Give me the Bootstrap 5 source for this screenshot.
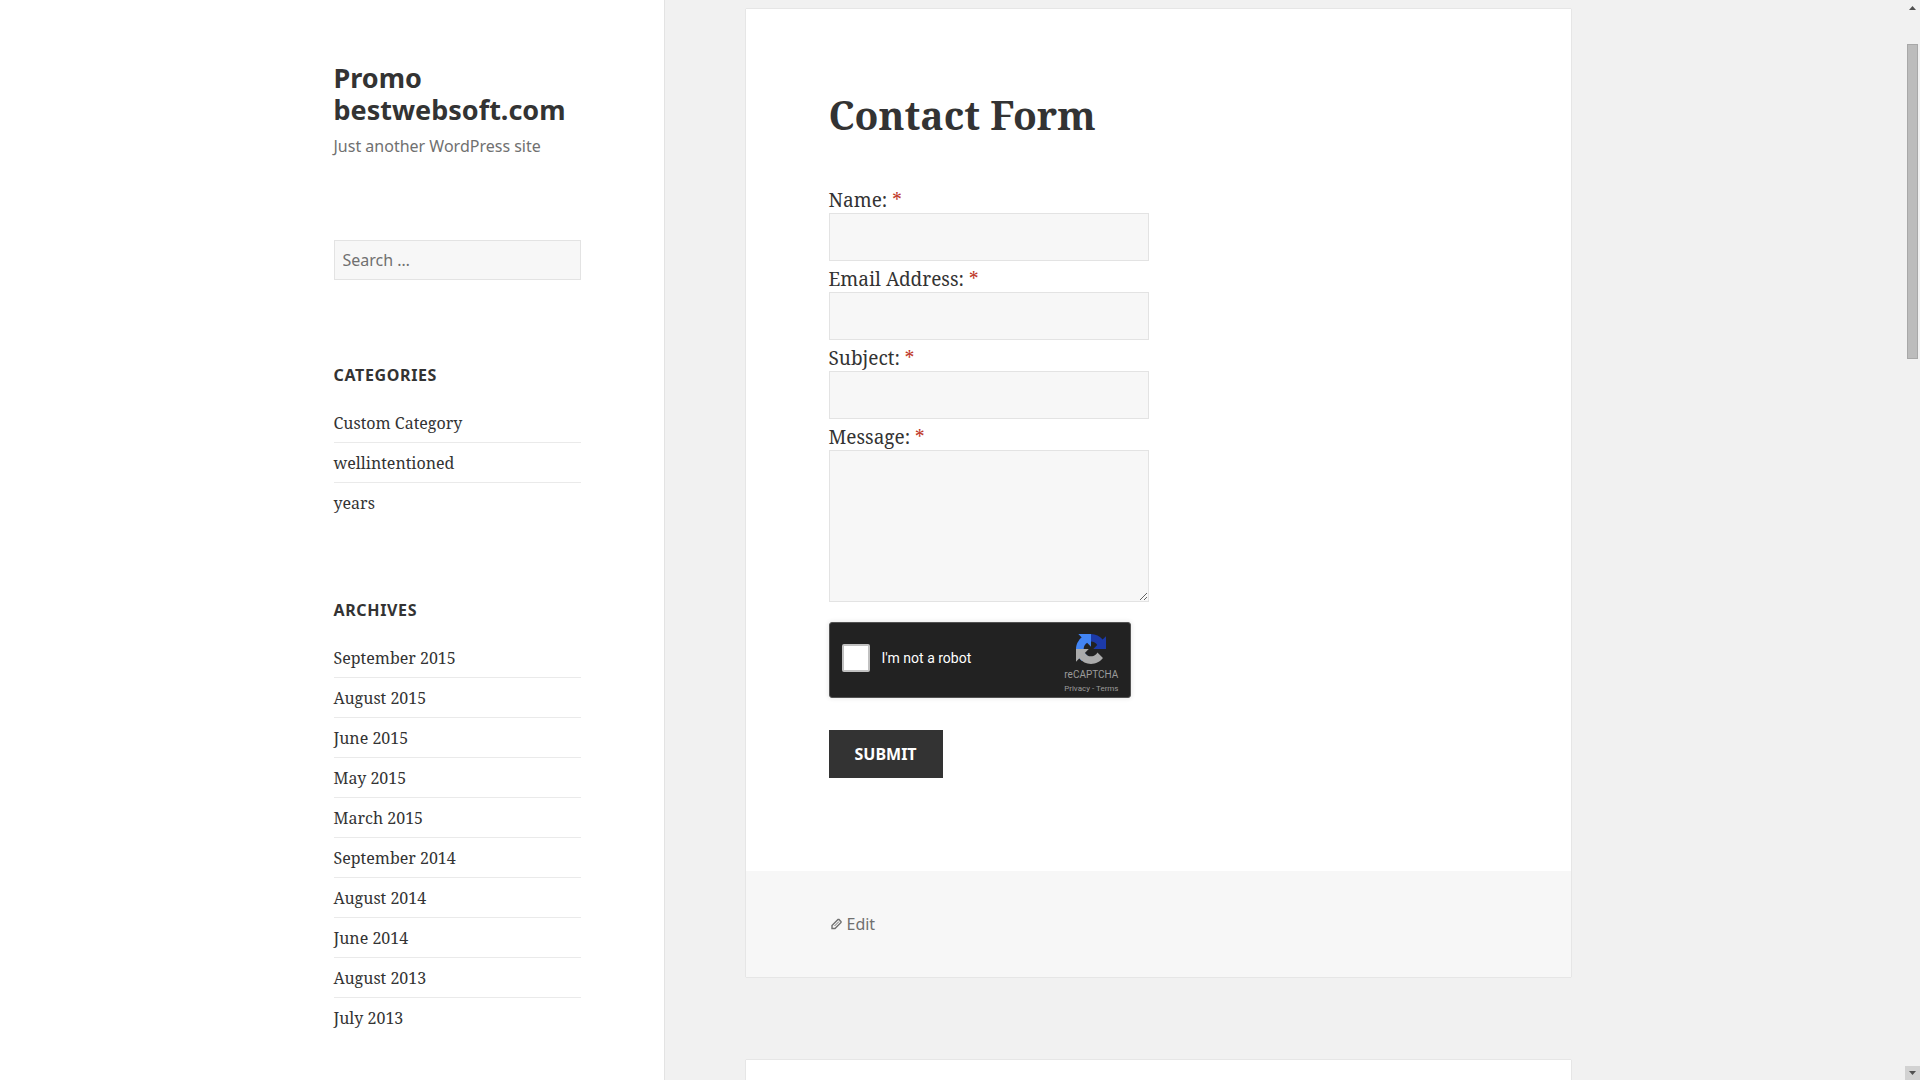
<!DOCTYPE html>
<html lang="en">
<head>
<meta charset="utf-8">
<meta name="viewport" content="width=device-width, initial-scale=1">
<title>Contact Form – Promo bestwebsoft.com</title>
<link href="https://cdn.jsdelivr.net/npm/bootstrap@5.3.0/dist/css/bootstrap.min.css" rel="stylesheet">
<style>
  :root { --ink: #333; --muted-ink: #707070; --edge: #e3e3e3; --field: #f7f7f7; --sans: "Noto Sans", sans-serif; --serif: "Noto Serif", "Droid Serif", "Liberation Serif", serif; }
  html, body { height: 100%; overflow: hidden; }
  body { background: #f1f1f1; color: var(--ink); font-family: var(--serif); font-size: 19px; line-height: 32px; padding-right: 15px; }
  .sidebar { width: calc(50% - 288px); background: #fff; border-right: 1px solid var(--edge); }
  .sidebar-inner { width: 413px; padding: 62px 83px 0; font-size: 16px; line-height: 24px; }
  .sidebar a, .sidebar a:hover { color: var(--ink); text-decoration: none; }
  .site-title { font: 700 27px/32px var(--sans); margin-bottom: 8px; }
  .site-tagline { font-family: var(--sans); color: var(--muted-ink); margin-bottom: 82px; }
  .form-control { border-color: var(--edge); border-radius: 0; background: var(--field); }
  .search-field { height: 40px; padding: 0 8px; font: 16px/24px var(--sans); color: var(--muted-ink); }
  .search-field::placeholder { color: var(--muted-ink); }
  .widget { padding-top: 83px; }
  .widget-title { font: 700 16px/24px var(--sans); letter-spacing: 0.04em; text-transform: uppercase; margin-bottom: 24px; }
  .widget li { padding: 8px 0 7px; }
  .widget li + li { border-top: 1px solid #eaeaea; }
  .widget li:first-child { padding-top: 0; }
  .widget li:last-child { padding-bottom: 0; }
  .content-area { max-width: 988px; padding: 9px 82px 0 81px; gap: 83px; }
  .entry { background: #fff; border-radius: 0; border: 0; box-shadow: 0 0 1px rgba(0, 0, 0, .25); }
  .entry-body { padding: 82px 83px 93px; }
  .entry-title { font: 700 39px/48px var(--serif); margin-bottom: 43px; }
  .contact-form { width: 320px; }
  .contact-form label { padding-top: 5px; line-height: 26px; }
  .contact-form .form-control { height: 48px; }
  .contact-form textarea.form-control { height: 152px; }
  .required-mark { color: #c0392b; }
  .captcha { width: 302px; height: 76px; margin: 20px 0 32px; padding: 0 11px 0 12px; background: #222; border: 1px solid #525252; border-radius: 3px; box-shadow: 0 0 4px 1px rgba(0, 0, 0, .08); font-family: Roboto, sans-serif; }
  .captcha-main { padding-bottom: 4px; }
  .captcha .captcha-box { width: 28px; height: 28px; margin: 0; background-color: #fff; border: 2px solid #c1c1c1; border-radius: 2px; }
  .contact-form .captcha label { color: #fff; font-size: 14px; line-height: 20px; padding: 0; margin-left: 12px; }
  .captcha-brand { color: #9b9b9b; font-size: 10px; line-height: 12px; padding-top: 11px; }
  .captcha-name { margin-top: 5px; }
  .captcha-links { font-size: 8px; line-height: 12px; margin-top: 2px; }
  .captcha-links a { color: inherit; text-decoration: none; }
  .submit-btn { height: 48px; padding: 0 26px; border: 0; border-radius: 0; background: var(--ink); color: #fff; font: 700 16px/24px var(--sans); text-transform: uppercase; }
  .entry-foot { padding: 41px 83px; background: var(--field); font: 16px/24px var(--sans); }
  .entry-foot a { color: var(--muted-ink); text-decoration: none; gap: 4px; }
  .next-entry { min-height: 20px; }
  .scroll-track { width: 15px; background: #f1f1f1; }
  .scroll-thumb { width: 11px; height: 315px; margin-top: 30px; background: #bcbcbc; border: 1px solid #a8a8a8; }
  .scroll-arrow { height: 14px; width: 15px; }
  .scroll-arrow.is-down { background: #d2d2d2; }
</style>
<script src="https://cdn.jsdelivr.net/npm/bootstrap@5.3.0/dist/js/bootstrap.bundle.min.js"></script>
</head>
<body>
<div class="d-flex h-100">
  <aside class="sidebar flex-shrink-0 d-flex justify-content-end">
    <div class="sidebar-inner">
      <header>
        <h1 class="site-title"><a href="#">Promo bestwebsoft.com</a></h1>
        <p class="site-tagline">Just another WordPress site</p>
      </header>
      <form role="search">
        <input class="form-control search-field" type="search" aria-label="Search" placeholder="Search …">
      </form>
      <section class="widget">
        <h2 class="widget-title">Categories</h2>
        <ul class="list-unstyled mb-0">
          <li><a href="#">Custom Category</a></li>
          <li><a href="#">wellintentioned</a></li>
          <li><a href="#">years</a></li>
        </ul>
      </section>
      <section class="widget">
        <h2 class="widget-title">Archives</h2>
        <ul class="list-unstyled mb-0">
          <li><a href="#">September 2015</a></li>
          <li><a href="#">August 2015</a></li>
          <li><a href="#">June 2015</a></li>
          <li><a href="#">May 2015</a></li>
          <li><a href="#">March 2015</a></li>
          <li><a href="#">September 2014</a></li>
          <li><a href="#">August 2014</a></li>
          <li><a href="#">June 2014</a></li>
          <li><a href="#">August 2013</a></li>
          <li><a href="#">July 2013</a></li>
        </ul>
      </section>
    </div>
  </aside>
  <main class="content-area flex-grow-1 d-flex flex-column">
    <article class="entry flex-shrink-0">
      <div class="entry-body">
        <h2 class="entry-title">Contact Form</h2>
        <form class="contact-form d-flex flex-column align-items-start">
          <label for="name">Name: <span class="required-mark">*</span></label>
          <input class="form-control" id="name" type="text">
          <label for="email">Email Address: <span class="required-mark">*</span></label>
          <input class="form-control" id="email" type="email">
          <label for="subject">Subject: <span class="required-mark">*</span></label>
          <input class="form-control" id="subject" type="text">
          <label for="message">Message: <span class="required-mark">*</span></label>
          <textarea class="form-control" id="message"></textarea>
          <div class="captcha d-flex">
            <div class="captcha-main d-flex align-items-center flex-grow-1">
              <input class="form-check-input captcha-box" id="robot" type="checkbox">
              <label for="robot">I'm not a robot</label>
            </div>
            <div class="captcha-brand d-flex flex-column align-items-center">
              <svg width="30" height="30" viewBox="0 0 64 64" aria-hidden="true">
                <path fill="#1c3aa9" d="M64 32V4.700l-7.200 7.200C51 4.700 42 0 32 0 21.600 0 12.400 5 6.500 12.600l11.800 11.900c1.200-2.100 2.800-4 4.800-5.400 2-1.600 4.900-2.900 9-2.900 5.500.2 10.500 3 13.100 7.300L36.900 32z"/>
                <path fill="#4285f4" d="M32 0H5l7.200 7.200C4.900 13 0 22 0 32c0 10.400 5 19.600 12.700 25.500l11.900-11.800c-2.100-1.200-4-2.800-5.400-4.800-1.600-2-2.900-4.900-2.900-9 .2-5.500 3-10.500 7.300-13.100L32 27.200z"/>
                <path fill="#ababab" d="M0 32v27l7.200-7.200C13 59.200 22 64 32 64c10.400 0 19.600-5 25.500-12.700L45.700 39.400c-1.200 2.100-2.800 4-4.800 5.400-2 1.600-4.900 2.900-9 2.900-5.500-.2-10.500-3-13.100-7.300L27.200 32z"/>
              </svg>
              <div class="captcha-name">reCAPTCHA</div>
              <div class="captcha-links"><a href="#">Privacy</a> - <a href="#">Terms</a></div>
            </div>
          </div>
          <button class="btn submit-btn" type="submit">Submit</button>
        </form>
      </div>
      <footer class="entry-foot d-flex">
        <a class="d-flex align-items-center" href="#">
          <svg width="14" height="14" viewBox="0 0 14 14" fill="none" stroke="currentColor" stroke-width="1.400" aria-hidden="true">
            <path d="M3 11.500V8.500L9 2.500H10L12 4.500V5.500L6 11.500z"/>
            <path stroke-width="1" d="M5.500 9L10 4.500"/>
          </svg>
          <span>Edit</span>
        </a>
      </footer>
    </article>
    <article class="entry next-entry flex-grow-1"></article>
  </main>
</div>
<div class="scroll-track position-fixed top-0 end-0 h-100 d-flex flex-column align-items-center" aria-hidden="true">
  <svg class="scroll-arrow" viewBox="0 0 15 14"><path fill="#505050" d="M4 10h7L7.500 6z"/></svg>
  <div class="scroll-thumb"></div>
  <svg class="scroll-arrow is-down mt-auto" viewBox="0 0 15 14"><path fill="#505050" d="M4 5h7L7.500 9z"/></svg>
</div>
</body>
</html>
